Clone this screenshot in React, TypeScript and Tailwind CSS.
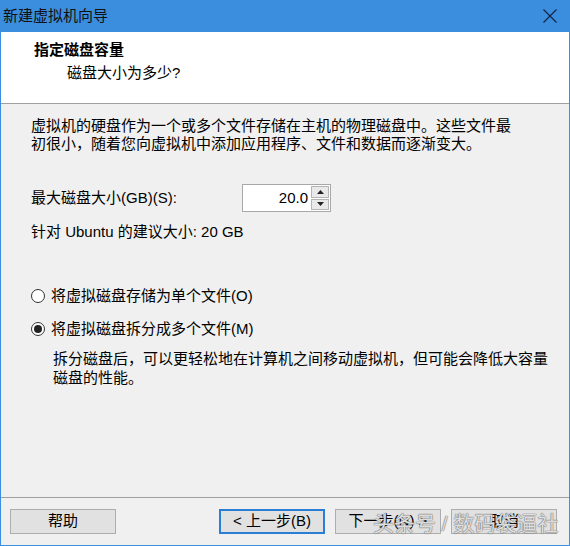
import React from 'react'

const font = { fontFamily: '"Liberation Sans", "Noto Sans CJK SC", sans-serif' }

function Radio({ checked, label }: { checked?: boolean; label: string }) {
  return (
    <div className="flex items-center h-[18px] leading-[18px]">
      <span className="w-[14px] h-[14px] rounded-full border border-[#333] bg-white flex items-center justify-center">
        {checked && <span className="w-[8px] h-[8px] rounded-full bg-[#222]" />}
      </span>
      <span className="ml-[6px]">{label}</span>
    </div>
  )
}

function Button({ label, primary }: { label: string; primary?: boolean }) {
  return (
    <div
      className={
        'w-[106px] h-[25px] bg-[#e1e1e1] flex items-center justify-center text-[15px] ' +
        (primary ? 'border-2 border-[#2a7fd4]' : 'border border-[#adadad]')
      }
    >
      {label}
    </div>
  )
}

export default function App() {
  return (
    <div
      className="relative w-[570px] h-[546px] flex flex-col bg-[#f0f0f0] border-x border-b border-[#3b8dde] text-[15px] text-black"
      style={font}
    >
      {/* title bar */}
      <div className="h-[32px] shrink-0 bg-[#3b8dde] flex items-center justify-between pl-[3px] pr-[13px] -mx-px">
        <span className="text-[15px] text-[#111]">新建虚拟机向导</span>
        <svg width="14" height="14" viewBox="0 0 14 14" className="text-[#13233f]">
          <path d="M0.5 0.5 L13.5 13.5 M13.5 0.5 L0.5 13.5" stroke="currentColor" strokeWidth="1.1" />
        </svg>
      </div>

      {/* header */}
      <div className="h-[72px] shrink-0 bg-white border-b border-[#a0a0a0] pt-[8px]">
        <div className="pl-[33px] font-bold leading-[20px] text-[15px]">指定磁盘容量</div>
        <div className="pl-[66px] mt-[3px] leading-[20px]">磁盘大小为多少?</div>
      </div>

      {/* body */}
      <div className="flex-1 pl-[30px] pt-[13px]">
        <p className="leading-[18px]">
          虚拟机的硬盘作为一个或多个文件存储在主机的物理磁盘中。这些文件最
          <br />
          初很小，随着您向虚拟机中添加应用程序、文件和数据而逐渐变大。
        </p>

        <div className="mt-[31px] flex items-center h-[28px]">
          <span className="w-[211px]">最大磁盘大小(GB)(S):</span>
          <div className="w-[89px] h-[28px] bg-white border border-[#a8a8a8] flex items-center">
            <span className="flex-1 text-right pr-[3px] leading-[18px]">20.0</span>
            <div className="w-[18px] h-[24px] mr-[1px] flex flex-col gap-px">
              <div className="flex-1 bg-[#e9e9e9] border border-[#b5b5b5] flex items-center justify-center">
                <svg width="7" height="4" viewBox="0 0 7 4">
                  <path d="M3.5 0 L7 4 L0 4 Z" fill="#222" />
                </svg>
              </div>
              <div className="flex-1 bg-[#e9e9e9] border border-[#b5b5b5] flex items-center justify-center">
                <svg width="7" height="4" viewBox="0 0 7 4">
                  <path d="M0 0 L7 0 L3.5 4 Z" fill="#222" />
                </svg>
              </div>
            </div>
          </div>
        </div>

        <div className="mt-[11px] leading-[18px]">针对 Ubuntu 的建议大小: 20 GB</div>

        <div className="mt-[46px]">
          <Radio label="将虚拟磁盘存储为单个文件(O)" />
        </div>
        <div className="mt-[15px]">
          <Radio checked label="将虚拟磁盘拆分成多个文件(M)" />
        </div>
        <p className="mt-[11px] pl-[22px] leading-[19px]">
          拆分磁盘后，可以更轻松地在计算机之间移动虚拟机，但可能会降低大容量
          <br />
          磁盘的性能。
        </p>
      </div>

      {/* footer */}
      <div className="h-[48px] shrink-0 border-t border-[#a0a0a0] flex items-start pt-[11px] pl-[9px]">
        <Button label="帮助" />
        <div className="ml-[103px]">
          <Button label="< 上一步(B)" primary />
        </div>
        <div className="ml-[10px]">
          <Button label="下一步(N) >" />
        </div>
        <div className="ml-[10px]">
          <Button label="取消" />
        </div>
      </div>

      {/* watermark */}
      <div className="absolute left-[372px] top-[511px] text-[21px] leading-[26px] text-white/80 whitespace-nowrap [text-shadow:0_0_1px_#555,0_0_1px_#555]">
        头条号 / 数码袋逼社
      </div>
    </div>
  )
}
